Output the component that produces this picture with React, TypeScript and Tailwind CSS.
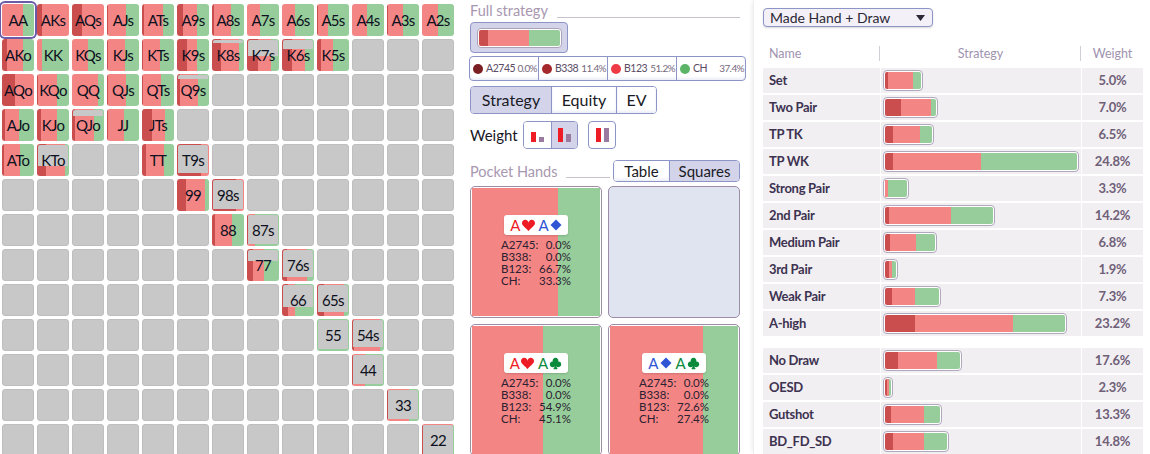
import { BsSuitClubFill, BsSuitHeartFill } from "react-icons/bs";

// [label, fill height %, dark px, pink px, green px]
type Cell = [string, number, number, number, number];

const cells: Record<string, Cell> = {
  AA: ["AA", 100, 0, 21, 11],
  AKs: ["AKs", 100, 5, 27, 0],
  AQs: ["AQs", 100, 10, 22, 0],
  AJs: ["AJs", 100, 1, 18, 13],
  ATs: ["ATs", 100, 2, 19, 11],
  A9s: ["A9s", 100, 6, 14, 12],
  A8s: ["A8s", 100, 2, 17, 13],
  A7s: ["A7s", 100, 0, 13, 19],
  A6s: ["A6s", 100, 0, 13, 19],
  A5s: ["A5s", 100, 1, 10, 21],
  A4s: ["A4s", 100, 0, 15, 17],
  A3s: ["A3s", 100, 1, 15, 16],
  A2s: ["A2s", 100, 0, 16, 16],
  AKo: ["AKo", 100, 5, 16, 11],
  KK: ["KK", 100, 0, 5, 27],
  KQs: ["KQs", 100, 0, 16, 16],
  KJs: ["KJs", 100, 1, 17, 14],
  KTs: ["KTs", 100, 1, 17, 14],
  K9s: ["K9s", 100, 10, 10, 12],
  K8s: ["K8s", 86, 9, 18, 5],
  K7s: ["K7s", 47, 11, 13, 8],
  K6s: ["K6s", 69, 10, 13, 9],
  K5s: ["K5s", 100, 4, 12, 16],
  AQo: ["AQo", 100, 13, 19, 0],
  KQo: ["KQo", 100, 1, 19, 12],
  QQ: ["QQ", 100, 0, 26, 6],
  QJs: ["QJs", 100, 1, 18, 13],
  QTs: ["QTs", 100, 1, 18, 13],
  Q9s: ["Q9s", 84, 3, 18, 11],
  AJo: ["AJo", 100, 3, 14, 15],
  KJo: ["KJo", 100, 4, 16, 12],
  QJo: ["QJo", 78, 3, 19, 10],
  JJ: ["JJ", 100, 1, 16, 15],
  JTs: ["JTs", 100, 10, 13, 9],
  ATo: ["ATo", 100, 2, 16, 14],
  KTo: ["KTo", 31, 9, 19, 4],
  TT: ["TT", 100, 4, 18, 10],
  T9s: ["T9s", 9, 24, 8, 0],
  "99": ["99", 100, 9, 19, 4],
  "98s": ["98s", 5, 24, 8, 0],
  "88": ["88", 100, 3, 17, 12],
  "87s": ["87s", 6, 1, 7, 24],
  "77": ["77", 62, 6, 11, 15],
  "76s": ["76s", 12, 5, 20, 7],
  "66": ["66", 28, 6, 7, 19],
  "65s": ["65s", 12, 7, 20, 5],
  "55": ["55", 6, 0, 0, 32],
  "54s": ["54s", 14, 2, 26, 4],
  "44": ["44", 6, 1, 12, 19],
  "33": ["33", 6, 1, 21, 10],
  "22": ["22", 3, 1, 30, 1],
};

const order = "AKQJT98765432".split("");

function HandCell({ row, col }: { row: number; col: number }) {
  const a = order[Math.min(row, col)];
  const b = order[Math.max(row, col)];
  const key = row === col ? a + b : a + b + (col > row ? "s" : "o");
  const c = cells[key];

  if (!c) {
    return <div className="h-8 w-8 rounded-[3px] border border-[#bebebe] bg-[#c8c8c8]" />;
  }

  const [label, fill, dark, pink, green] = c;
  return (
    <div
      className={`relative flex h-8 w-8 items-center justify-center rounded-[3px] ${
        label === "AA" ? "shadow-[0_0_0_1px_#ffffff,0_0_0_3px_#6a5aa8]" : ""
      }`}
    >
      <div className="absolute inset-0 flex overflow-hidden rounded-[3px]">
        <div className="h-full bg-[#cb4e4e]" style={{ width: dark }} />
        <div className="h-full bg-[#f48585]" style={{ width: pink }} />
        <div className="h-full bg-[#96cd9a]" style={{ width: green }} />
      </div>
      {fill < 100 && (
        <div
          className="absolute left-px right-px top-px rounded-t-[2px] bg-[#c8c8c8]"
          style={{ height: `calc(${100 - fill}% - 1px)` }}
        />
      )}
      <span className="relative text-[15px] leading-none tracking-[-0.7px] text-[#0d1020]">{label}</span>
    </div>
  );
}

function Matrix() {
  return (
    <div className="grid h-[454px] w-[470px] shrink-0 grid-cols-[repeat(13,32px)] content-start gap-[3px] overflow-hidden pl-[2px] pt-[4px]">
      {order.map((_, row) =>
        order.map((_, col) => <HandCell key={`${row}-${col}`} row={row} col={col} />)
      )}
    </div>
  );
}

const legend = [
  { name: "A2745", value: "0.0%", dot: "bg-[#7a1f22]" },
  { name: "B338", value: "11.4%", dot: "bg-[#a5282c]" },
  { name: "B123", value: "51.2%", dot: "bg-[#ee3b45]" },
  { name: "CH", value: "37.4%", dot: "bg-[#5cb566]" },
];

function Legend() {
  return (
    <div className="mt-[3px] -ml-px flex h-[25px] w-[277px] overflow-hidden rounded-[4px] border border-[#8d95c6] bg-white shadow-[inset_0_-2px_3px_#eceef8]">
      {legend.map((item, i) => (
        <div
          key={item.name}
          className={`flex min-w-0 flex-1 items-center overflow-hidden pl-[3px] text-[#5b4d63] ${
            i > 0 ? "border-l border-[#8d95c6]" : ""
          }`}
        >
          <span className={`mr-[3px] h-[10px] w-[10px] shrink-0 rounded-full ${item.dot}`} />
          <span className="shrink-0 text-[10.5px] tracking-[-0.45px]">{item.name}</span>
          <span className="ml-auto shrink-0 pr-[1px] text-[10px] tracking-[-0.6px] text-[#766a7c]">
            {item.value}
          </span>
        </div>
      ))}
    </div>
  );
}

function Seg({
  label,
  active,
  className,
}: {
  label: string;
  active?: boolean;
  className: string;
}) {
  return (
    <div
      className={`flex items-center justify-center text-[#1a1a24] ${className} ${
        active ? "bg-[#d3d4ea]" : "bg-white shadow-[inset_0_-2px_3px_#eceef8]"
      }`}
    >
      {label}
    </div>
  );
}

function WeightIcon({ red, purple }: { red: number; purple: number }) {
  return (
    <svg width="14" height="14" viewBox="0 0 14 14">
      <rect x="0" y={14 - red} width="5" height={red} fill="#ee1c25" />
      <rect x="8" y={14 - purple} width="5" height={purple} fill="#9b7aa0" />
    </svg>
  );
}

function Diamond() {
  return (
    <svg className="ml-px h-[12px] w-[12px]" viewBox="0 0 12 12">
      <path d="M6 0.5 L11.5 6 L6 11.5 L0.5 6 Z" fill="currentColor" />
    </svg>
  );
}

function Hole({
  cards,
  stats,
  pink,
  green,
}: {
  cards: { suit: "h" | "d" | "c" }[];
  stats: string[];
  pink: number;
  green: number;
}) {
  const names = ["A2745:", "B338:", "B123:", "CH:"];
  const tone = { h: "text-[#ee1c25]", d: "text-[#2f55d4]", c: "text-[#0c8a3c]" };
  return (
    <div className="relative h-[132px] overflow-hidden rounded-[5px] border border-[#9c8ca6] bg-white p-px">
      <div className="flex h-full">
        <div className="h-full bg-[#f48585]" style={{ width: pink }} />
        <div className="h-full bg-[#96cd9a]" style={{ width: green }} />
      </div>
      <div className="absolute inset-0 flex flex-col items-center justify-center pb-[2px]">
        <div className="flex h-5 w-16 items-center justify-center gap-[4px] rounded-[3px] bg-white text-[15px] shadow-[0_1px_2px_rgba(0,0,0,0.15)]">
          {cards.map((card, i) => (
            <span key={i} className={`flex items-center ${tone[card.suit]}`}>
              A
              {card.suit === "h" && <BsSuitHeartFill className="ml-px h-[13px] w-[13px]" />}
              {card.suit === "d" && <Diamond />}
              {card.suit === "c" && <BsSuitClubFill className="ml-px h-[13px] w-[13px]" />}
            </span>
          ))}
        </div>
        <div className="mt-[4px] w-[70px] text-[11.5px] leading-[12px] text-[#2a2230]">
          {names.map((name, i) => (
            <div key={name} className="flex justify-between">
              <span>{name}</span>
              <span>{stats[i]}</span>
            </div>
          ))}
        </div>
      </div>
    </div>
  );
}

function Middle() {
  return (
    <div className="w-[270px] shrink-0">
      <div className="flex h-[20px] items-end">
        <span className="text-[14.5px] leading-[18px] text-[#a897b0]">Full strategy</span>
        <div className="mb-[2px] ml-[9px] flex-1 border-b border-[#c9c2ce]" />
      </div>
      <div className="mt-[2px] flex h-[31px] w-[98px] items-center justify-center rounded-[4px] border border-[#8d95c6] bg-[#d3d4ea]">
        <div className="flex h-[20px] w-[85px] rounded-[4px] border border-[#aaa2b6] bg-white p-px">
          <div className="h-full w-[10px] rounded-l-[2px] bg-[#cb4e4e]" />
          <div className="h-full w-[42px] bg-[#f48585]" />
          <div className="h-full w-[31px] rounded-r-[2px] bg-[#96cd9a]" />
        </div>
      </div>
      <Legend />
      <div className="mt-[5px] flex h-[28px] w-[187px] overflow-hidden rounded-[4px] border border-[#8d95c6] text-[16px]">
        <Seg label="Strategy" active className="w-[80px]" />
        <Seg label="Equity" className="w-[65px] border-l border-[#8d95c6]" />
        <Seg label="EV" className="flex-1 border-l border-[#8d95c6]" />
      </div>
      <div className="mt-[7px] flex h-[28px] items-center">
        <span className="w-[53px] text-[15px] text-[#17171f]">Weight</span>
        <div className="flex h-[28px] w-[55px] overflow-hidden rounded-[4px] border border-[#8d95c6]">
          <div className="flex w-[27px] items-center justify-center bg-white pl-[1px]">
            <WeightIcon red={10} purple={5} />
          </div>
          <div className="flex flex-1 items-center justify-center border-l border-[#8d95c6] bg-[#d3d4ea] pl-[1px]">
            <WeightIcon red={14} purple={8} />
          </div>
        </div>
        <div className="ml-[10px] flex h-[28px] w-[28px] items-center justify-center rounded-[4px] border border-[#8d95c6] bg-white pl-[1px]">
          <WeightIcon red={14} purple={14} />
        </div>
      </div>
      <div className="mt-[11px] flex h-[22px] items-end">
        <span className="text-[14.5px] leading-[20px] text-[#a897b0]">Pocket Hands</span>
        <div className="mb-[4px] ml-[8px] w-[44px] border-b border-[#c9c2ce]" />
        <div className="ml-auto flex h-[22px] w-[127px] overflow-hidden rounded-[4px] border border-[#8d95c6] text-[15px]">
          <Seg label="Table" className="w-[55px]" />
          <Seg label="Squares" active className="flex-1 border-l border-[#8d95c6]" />
        </div>
      </div>
      <div className="mt-[4px] grid grid-cols-[132px_132px] gap-[6px]">
        <Hole
          cards={[{ suit: "h" }, { suit: "d" }]}
          stats={["0.0%", "0.0%", "66.7%", "33.3%"]}
          pink={86}
          green={42}
        />
        <div className="h-[132px] rounded-[5px] border border-[#9c8ca6] bg-[#e0e4f1]" />
        <Hole
          cards={[{ suit: "h" }, { suit: "c" }]}
          stats={["0.0%", "0.0%", "54.9%", "45.1%"]}
          pink={71}
          green={57}
        />
        <Hole
          cards={[{ suit: "d" }, { suit: "c" }]}
          stats={["0.0%", "0.0%", "72.6%", "27.4%"]}
          pink={93}
          green={35}
        />
      </div>
    </div>
  );
}

type Row = { name: string; weight: string; bar: [number, number, number] };

const made: Row[] = [
  { name: "Set", weight: "5.0%", bar: [3, 25, 8] },
  { name: "Two Pair", weight: "7.0%", bar: [16, 30, 5] },
  { name: "TP TK", weight: "6.5%", bar: [8, 27, 12] },
  { name: "TP WK", weight: "24.8%", bar: [8, 88, 96] },
  { name: "Strong Pair", weight: "3.3%", bar: [0, 3, 19] },
  { name: "2nd Pair", weight: "14.2%", bar: [4, 62, 42] },
  { name: "Medium Pair", weight: "6.8%", bar: [5, 26, 19] },
  { name: "3rd Pair", weight: "1.9%", bar: [4, 3, 4] },
  { name: "Weak Pair", weight: "7.3%", bar: [7, 23, 24] },
  { name: "A-high", weight: "23.2%", bar: [30, 98, 52] },
];

const draws: Row[] = [
  { name: "No Draw", weight: "17.6%", bar: [13, 39, 23] },
  { name: "OESD", weight: "2.3%", bar: [2, 2, 2] },
  { name: "Gutshot", weight: "13.3%", bar: [6, 33, 16] },
  { name: "BD_FD_SD", weight: "14.8%", bar: [8, 31, 23] },
];

function TableRow({ row }: { row: Row }) {
  const [dark, pink, green] = row.bar;
  return (
    <div className="grid h-[25px] grid-cols-[117px_200px_61px] gap-x-[1px] font-bold">
      <div className="flex items-center bg-[#f1eff2] pl-[6px] text-[13px] tracking-[-0.3px] text-[#3d3250]">
        {row.name}
      </div>
      <div className="flex items-center bg-[#f1eff2] pl-[2px]">
        <div className="flex h-[21px] overflow-hidden rounded-[4px] border border-[#b0a8bc] bg-white p-px">
          <div className="h-full rounded-l-[2px] bg-[#cb4e4e]" style={{ width: dark }} />
          <div className="h-full bg-[#f48585]" style={{ width: pink }} />
          <div className="h-full rounded-r-[2px] bg-[#96cd9a]" style={{ width: green }} />
        </div>
      </div>
      <div className="flex items-center justify-center bg-[#f1eff2] text-[13px] tracking-[-0.2px] text-[#6f6078]">
        {row.weight}
      </div>
    </div>
  );
}

function Right() {
  return (
    <div className="ml-[13px] w-[390px] shrink-0 border-l border-[#eeeeee] pl-[9px] pt-[8px] shadow-[-3px_0_4px_-2px_rgba(0,0,0,0.08)]">
      <div className="flex h-[19px] w-[170px] items-center justify-between rounded-[4px] border border-[#8d95c6] bg-[#f3f1f7] pl-[6px] pr-[7px] text-[14px] text-[#2c2836] shadow-[0_1px_2px_rgba(0,0,0,0.15)]">
        Made Hand + Draw
        <svg width="9" height="6" viewBox="0 0 9 6">
          <path d="M0 0h9L4.5 6z" fill="#2c2836" />
        </svg>
      </div>
      <div className="mt-[19px] grid h-[15px] grid-cols-[117px_200px_61px] gap-x-[1px] text-[12.5px] leading-[15px] text-[#a093b0]">
        <div className="border-r border-[#d3cfd8] pl-[6px]">Name</div>
        <div className="border-r border-[#d3cfd8] text-center">Strategy</div>
        <div className="text-center">Weight</div>
      </div>
      <div className="mt-[7px] flex flex-col gap-[2px]">
        {made.map((row) => (
          <TableRow key={row.name} row={row} />
        ))}
      </div>
      <div className="mt-[12px] flex flex-col gap-[2px]">
        {draws.map((row) => (
          <TableRow key={row.name} row={row} />
        ))}
      </div>
    </div>
  );
}

export default function App() {
  return (
    <div className="flex h-[454px] w-[1150px] overflow-hidden bg-white font-['Lato',sans-serif]">
      <Matrix />
      <Middle />
      <Right />
    </div>
  );
}
